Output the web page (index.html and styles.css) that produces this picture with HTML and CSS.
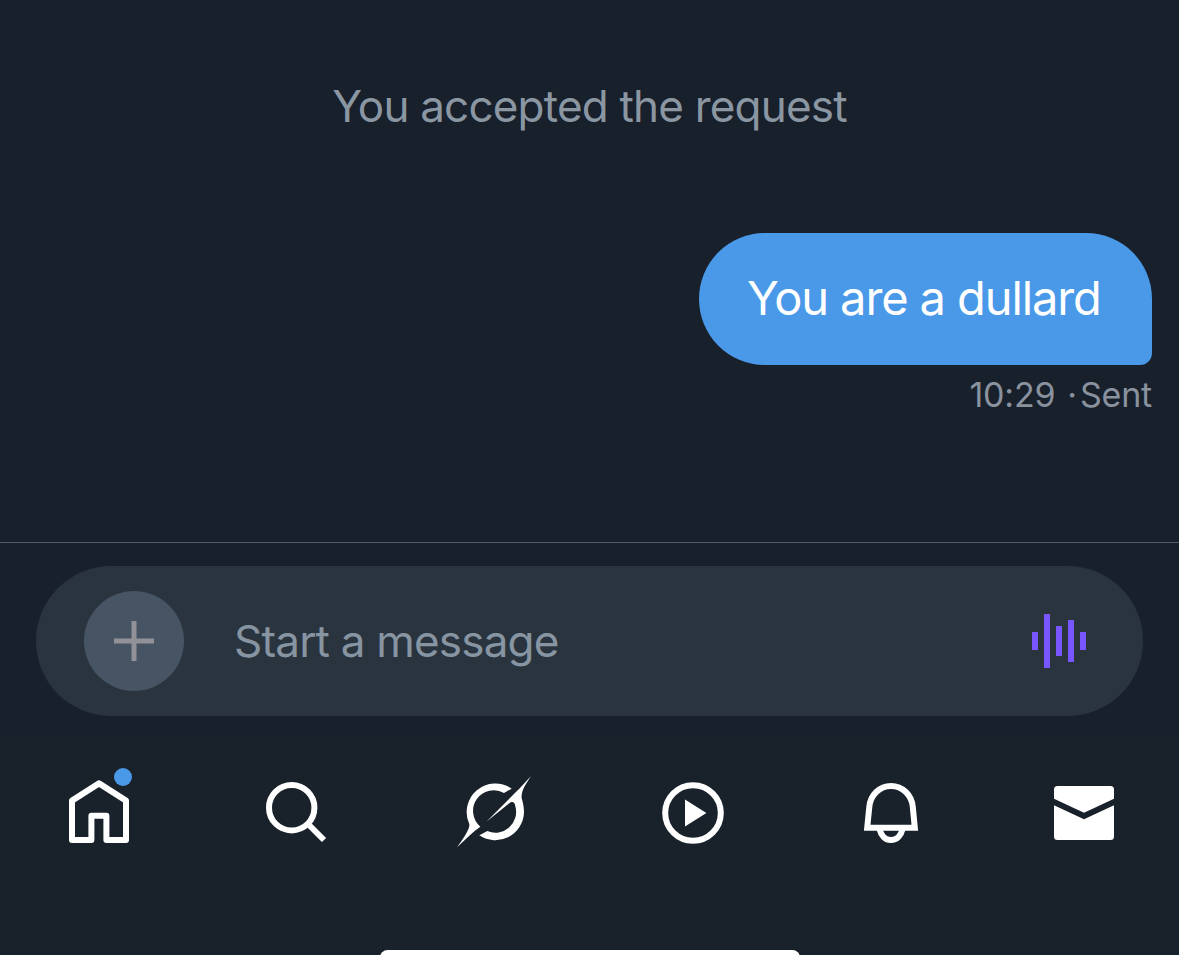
FILE: index.html
```
<!DOCTYPE html>
<html lang="en">
<head>
  <meta charset="UTF-8">
  <title>Messages</title>
  <meta name="viewport" content="width=device-width, initial-scale=1.0">
  <link rel="stylesheet" href="styles.css">
</head>
<body>
  <div class="screen">
    <!-- Conversation -->
    <main class="chat">
      <p class="notice">You accepted the request</p>
      <div class="bubble">You are a dullard</div>
      <div class="meta"><span class="time">10:29</span><span class="dot">·</span><span class="status">Sent</span></div>
    </main>

    <!-- Message box -->
    <div class="composer">
      <div class="pill">
        <button class="add" aria-label="Add">
          <svg width="40" height="40" viewBox="0 0 40 40"><path d="M20 0V40M0 20H40"/></svg>
        </button>
        <span class="placeholder">Start a message</span>
        <svg class="voice" width="54" height="54" viewBox="0 0 54 54">
          <path d="M3 18V36M15 0V54M27 12V42M39 6V48M51 18V36"/>
        </svg>
      </div>
    </div>

    <!-- Bottom tabs -->
    <nav class="tabs">
      <svg class="icon" viewBox="-1 -10 100 110">
        <path class="line round" d="M49 28.4L22 45.6V85H41.4V60.8H56.4V85H76V45.6Z"/>
        <circle class="badge" cx="73" cy="22" r="9"/>
      </svg>
      <svg class="icon" viewBox="-4 0 100 110">
        <circle class="line" cx="41.7" cy="42.7" r="22.7"/>
        <path class="line" d="M58 59L74 75"/>
      </svg>
      <svg class="icon" viewBox="-6 0 300 330">
        <path d="M200 71A86 86 0 0 0 73 178C75 191 58 217 36 247C62 222 83 201 106 185A62 62 0 0 1 177 84Z"/>
        <path d="M124 170L212 82C226 69 243 49 258 33C243 57 228 76 230 100C234 112 237 127 237 142A86 86 0 0 1 103 211L127 198A62 62 0 0 0 211 124C209 110 201 108 191 116Z"/>
      </svg>
      <svg class="icon" viewBox="-5 0 100 110">
        <circle class="line" cx="48" cy="48" r="27.8"/>
        <path d="M40 34.4L61.4 48L40 61.4Z"/>
      </svg>
      <svg class="icon" viewBox="-8 0 100 110">
        <path class="line" d="M22.2 62.7L24.3 42C25.3 30 34.5 21 46 21S66.8 30 67.8 42L69.8 62.7Z"/>
        <path class="line" d="M34.7 64.5C36 70.5 40.3 75 46 75S56 70.5 57.4 64.5"/>
      </svg>
      <svg class="icon" viewBox="-1 0 100 110">
        <path d="M19 33.7V24.5Q19 21 22.5 21H75.5Q79 21 79 24.5V33.7L49 47.7Z"/>
        <path d="M19 40.2L49 54.2L79 40.2V71.5Q79 75 75.5 75H22.5Q19 75 19 71.5Z"/>
      </svg>
    </nav>
    <div class="home-bar"></div>
  </div>
</body>
</html>
```

FILE: styles.css
```
*, *::before, *::after {
  box-sizing: border-box;
}
html, body {
  margin: 0;
  padding: 0;
  background-color: #18202b;
  font-family: Inter, 'Liberation Sans', sans-serif;
}
.screen {
  width: 1179px;
  height: 955px;
  display: flex;
  flex-direction: column;
  overflow: hidden;
}
/* Conversation */
.chat {
  height: 542px;
  padding: 76px 27px 0;
  display: flex;
  flex-direction: column;
  align-items: flex-end;
}
.notice {
  width: 100%;
  margin: 0 0 97px;
  text-align: center;
  font-size: 44px;
  line-height: 60px;
  letter-spacing: -0.8px;
  color: #8b96a3;
}
.bubble {
  width: 453px;
  height: 132px;
  padding: 35px 0 0 48px;
  border-radius: 66px 66px 12px 66px;
  background-color: #4a99e9;
  color: #fff;
  font-size: 47px;
  line-height: 60px;
  letter-spacing: -1.1px;
  white-space: nowrap;
}
.meta {
  display: flex;
  margin-top: 10px;
  font-size: 34px;
  line-height: 40px;
  letter-spacing: -0.2px;
  color: #89929e;
}
.dot {
  margin: 0 3px 0 12px;
}
/* Message box */
.composer {
  height: 200px;
  padding: 23px 36px 0;
  border-top: 1px solid #505964;
}
.pill {
  height: 150px;
  padding: 0 57px 0 48px;
  border-radius: 75px;
  display: flex;
  align-items: center;
  background-color: #2a343f;
}
.add {
  width: 100px;
  height: 100px;
  padding: 0;
  border: none;
  border-radius: 50%;
  display: flex;
  align-items: center;
  justify-content: center;
  background-color: #465463;
}
.add path {
  stroke: #919197;
  stroke-width: 5;
}
.placeholder {
  flex: 1;
  margin-left: 50px;
  font-size: 44px;
  letter-spacing: -0.8px;
  color: #8794a2;
}
.voice path {
  stroke: #7856ff;
  stroke-width: 6;
}
/* Bottom tabs */
.tabs {
  flex: 1;
  padding: 23px 45px 0 49px;
  display: flex;
  justify-content: space-between;
  align-items: flex-start;
  background-color: #19212a;
}
.icon {
  width: 100px;
  height: 110px;
  fill: #fff;
}
.icon:first-child {
  margin-top: -20px;
}
.icon .line {
  fill: none;
  stroke: #fff;
  stroke-width: 6;
}
.icon .round {
  stroke-linejoin: round;
}
.icon .badge {
  fill: #4a99e9;
}
.home-bar {
  width: 420px;
  height: 15px;
  margin: 0 auto -10px;
  flex-shrink: 0;
  border-radius: 8px;
  background-color: #fff;
}
```
